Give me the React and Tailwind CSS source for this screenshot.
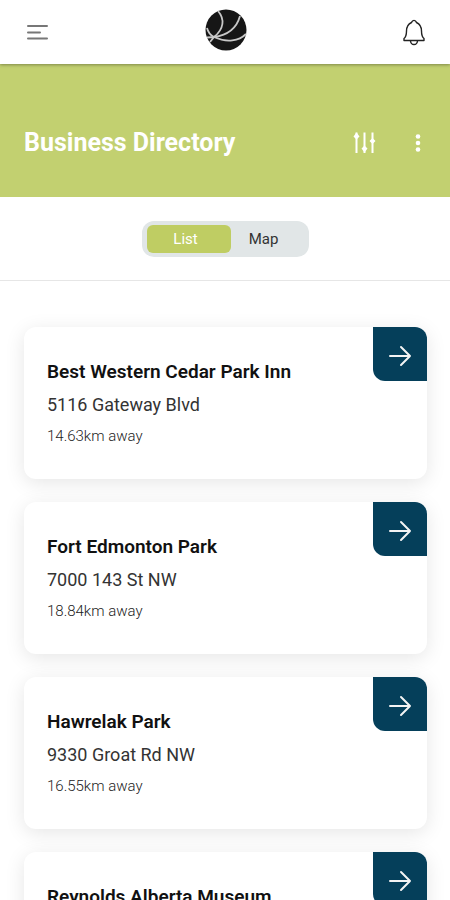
import React, { useState } from 'react';

const businesses = [
  { name: 'Best Western Cedar Park Inn', address: '5116 Gateway Blvd', distance: '14.63km away' },
  { name: 'Fort Edmonton Park', address: '7000 143 St NW', distance: '18.84km away' },
  { name: 'Hawrelak Park', address: '9330 Groat Rd NW', distance: '16.55km away' },
  { name: 'Reynolds Alberta Museum', address: '6426 40 Ave', distance: '52.17km away' },
];

const Logo = () => (
  <svg className="size-[42px]" viewBox="0 0 42 42" fill="none" aria-hidden="true">
    <circle cx="21" cy="21" r="20.5" fill="#161616" />
    <g stroke="#c8c8c8" strokeWidth="1.8">
      <path d="M13 2C20 10 19 20 9 28" />
      <path d="M35 7C32 18 24 26 9 28" />
      <path d="M41 25C34 32 22 34 9 28" />
      <path d="M2 19C3 23 5 26 9 28" />
      <path d="M2 28.500L9 28L5 33" />
    </g>
  </svg>
);

const BellIcon = () => (
  <svg className="h-7 w-6" viewBox="0 0 24 28" fill="none" stroke="#222" strokeWidth="1.4" strokeLinejoin="round" aria-hidden="true">
    <path d="M2 22.500V20.500C4 19 4.500 17 4.500 13C4.500 8 6.500 6 9.500 4.500C10.500 1.700 13.500 1.700 14.500 4.500C17.500 6 19.500 8 19.500 13C19.500 17 20 19 22 20.500V22.500Z" />
    <path d="M8.500 23C9 27.700 15 27.700 15.500 23" />
  </svg>
);

const SlidersIcon = () => (
  <svg className="h-6 w-6" viewBox="0 0 24 24" stroke="white" strokeWidth="2" fill="white" aria-hidden="true">
    <path d="M4.500 1.500v20.500M12.500 1.500v20.500M20.500 1.500v20.500" />
    <g stroke="none">
      <path d="M4.500 1.500l3 4l-3 3l-3 -3zM12.500 14.500l3 3l-3 4l-3 -4zM20.500 7l3 3l-3 3l-3 -3z" />
    </g>
  </svg>
);

const DotsIcon = () => (
  <svg className="h-6 w-6" viewBox="0 0 24 24" fill="white" aria-hidden="true">
    <circle cx="12" cy="5.500" r="2.300" />
    <circle cx="12" cy="12" r="2.300" />
    <circle cx="12" cy="18.500" r="2.300" />
  </svg>
);

const BusinessCard = ({ business }) => (
  <li className="flex items-start justify-between rounded-xl bg-white pb-[33px] pl-[23px] shadow-[0_4px_20px_rgba(0,0,0,0.10)]">
    <div className="pt-8">
      <h2 className="text-[19px] leading-[26px] font-semibold text-[#111]">{business.name}</h2>
      <p className="mt-[7px] text-lg leading-[26px] text-[#333]">{business.address}</p>
      <p className="mt-2 text-[15px] leading-5 font-light text-[#222]">{business.distance}</p>
    </div>
    <a
      href="#details"
      aria-label={`View ${business.name}`}
      className="flex size-[54px] shrink-0 items-center justify-center rounded-tr-xl rounded-bl-xl bg-[#053f5a] pt-1"
    >
      <svg className="size-6" viewBox="0 0 24 24" fill="none" stroke="#f4f4f4" strokeWidth="2" strokeLinecap="round" strokeLinejoin="round" aria-hidden="true">
        <path d="M2 12h20M13 3l9 9l-9 9" />
      </svg>
    </a>
  </li>
);

const App = () => {
  const [view, setView] = useState('list');

  const tabClass = (name) => (name === view ? 'bg-[#bfcd63] text-white' : 'text-[#333]');

  return (
    <div className="flex h-screen flex-col overflow-hidden bg-white font-['Roboto',sans-serif]">
      {/* Top bar */}
      <header className="relative z-10 flex h-16 shrink-0 items-center justify-between bg-white pr-6 pb-1 pl-[26px] shadow-[0_1px_3px_rgba(0,0,0,0.35)]">
        <button type="button" aria-label="Open menu" className="flex w-12 items-center">
          <svg className="h-6 w-7" viewBox="0 0 28 24" stroke="#777" strokeWidth="2" strokeLinecap="round" aria-hidden="true">
            <path d="M2 8h19M2 14.500h12M2 20.500h19" />
          </svg>
        </button>
        <Logo />
        <button type="button" aria-label="Notifications" className="flex w-12 justify-end pt-1">
          <BellIcon />
        </button>
      </header>

      {/* Page title */}
      <section className="flex h-[133px] shrink-0 items-center justify-between bg-[#c2d070] pt-6 pr-5 pl-6">
        <h1 className="text-[25px] leading-8 font-bold text-white">Business Directory</h1>
        <div className="flex items-center gap-[30px]">
          <button type="button" aria-label="Filter">
            <SlidersIcon />
          </button>
          <button type="button" aria-label="More options">
            <DotsIcon />
          </button>
        </div>
      </section>

      {/* List / map switch */}
      <div className="flex h-[84px] shrink-0 items-center justify-center border-b border-[#e6e6e6]">
        <div className="flex rounded-xl bg-[#e1e6e7] py-1 pr-3 pl-[5px] text-[15px] leading-5">
          <button
            type="button"
            aria-pressed={view === 'list'}
            onClick={() => setView('list')}
            className={`h-7 w-[84px] rounded-md pr-1.5 ${tabClass('list')}`}
          >
            List
          </button>
          <button
            type="button"
            aria-pressed={view === 'map'}
            onClick={() => setView('map')}
            className={`h-7 w-[66px] rounded-md ${tabClass('map')}`}
          >
            Map
          </button>
        </div>
      </div>

      {/* Results */}
      <main className="min-h-0 flex-1 overflow-y-auto pt-[46px] pr-[23px] pb-6 pl-6 [scrollbar-width:none]">
        <ul className="flex flex-col gap-[23px]">
          {businesses.map((business) => (
            <BusinessCard key={business.name} business={business} />
          ))}
        </ul>
      </main>
    </div>
  );
};

export default App;
